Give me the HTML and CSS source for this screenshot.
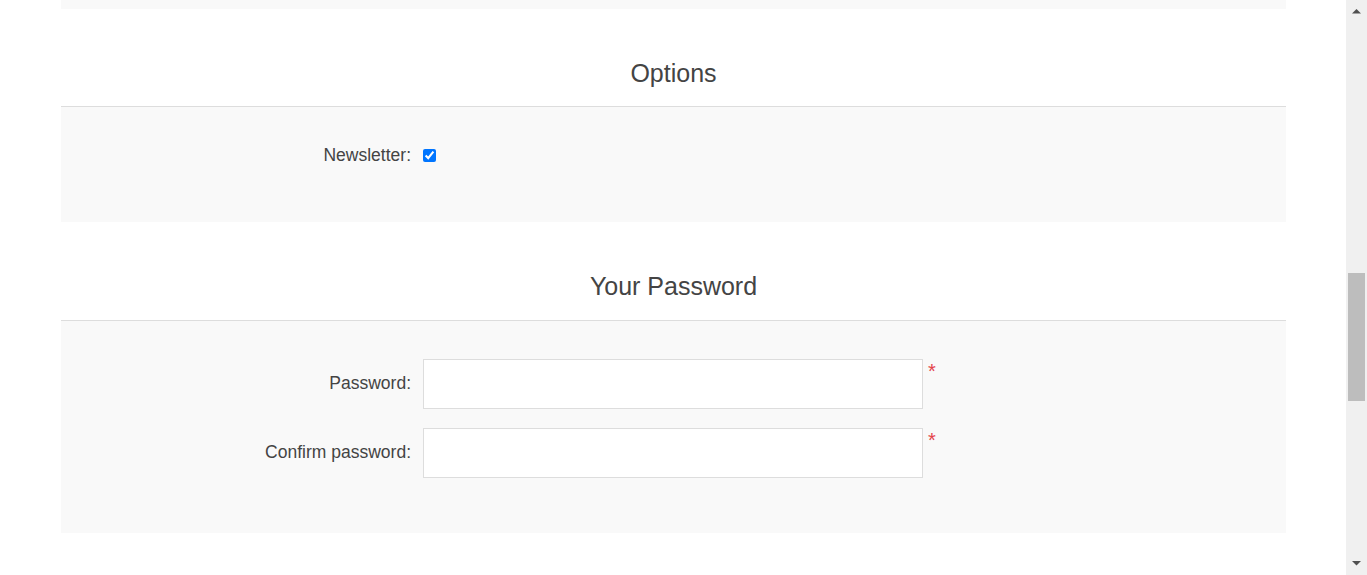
FILE: index.html
```html
<!DOCTYPE html>
<html lang="en">
<head>
<meta charset="utf-8">
<title>Register</title>
<link rel="stylesheet" href="styles.css">
</head>
<body>
<div class="master">
  <form class="page-body">
    <div class="form-fields prev-end"></div>

    <section class="fieldset first">
      <div class="title">Options</div>
      <div class="form-fields">
        <div class="inputs check-row">
          <label for="newsletter">Newsletter:</label>
          <input id="newsletter" class="check" type="checkbox" checked>
        </div>
      </div>
    </section>

    <section class="fieldset">
      <div class="title">Your Password</div>
      <div class="form-fields">
        <div class="inputs">
          <label for="pw">Password:</label>
          <input id="pw" class="text-box" type="password"><span class="required">*</span>
        </div>
        <div class="inputs">
          <label for="cpw">Confirm password:</label>
          <input id="cpw" class="text-box" type="password"><span class="required">*</span>
        </div>
      </div>
    </section>
  </form>
</div>

<div class="scrollbar" aria-hidden="true">
  <svg class="arrow" width="21" height="21" viewBox="0 0 21 21"><polygon points="6,13.5 10.5,9 15,13.5" fill="#505050"/></svg>
  <div class="track"><div class="thumb"></div></div>
  <svg class="arrow" width="21" height="21" viewBox="0 0 21 21"><polygon points="6,7 15,7 10.5,11.5" fill="#505050"/></svg>
</div>
</body>
</html>
```

FILE: styles.css
```css
body {
  margin: 0;
  background: #fff;
  font-family: "Liberation Sans", Arial, sans-serif;
  color: #444;
  overflow: hidden;
}

.master {
  width: 1225px;
  margin: 0 0 0 61px;
}

/* fieldsets */
.fieldset { margin-top: 48px; }
.fieldset + .fieldset { margin-top: 49px; }
.title {
  text-align: center;
  font-size: 25px;
  line-height: 30px;
  color: #444;
  padding-bottom: 19px;
  border-bottom: 1px solid #ddd;
}
.fieldset.first .title {
  padding-top: 1px;
  padding-bottom: 18px;
}
.form-fields {
  background: #f9f9f9;
  padding: 38px 0 36px;
}
.form-fields.prev-end {
  height: 9px;
  padding: 0;
}
.inputs {
  display: flex;
  align-items: center;
  margin-bottom: 19px;
}
.inputs label {
  width: 350px;
  flex: none;
  margin-right: 12px;
  padding-bottom: 2px;
  text-align: right;
  font-size: 17.5px;
  color: #444;
}
.check-row { height: 22px; }
.check {
  margin: 0 0 2px;
  width: 13px;
  height: 13px;
  accent-color: #0075ff;
}
.text-box {
  box-sizing: border-box;
  width: 500px;
  height: 50px;
  border: 1px solid #ddd;
  background: #fff;
  padding: 0 10px;
  margin: 0;
  font: inherit;
}
.required {
  align-self: flex-start;
  margin: 0 -8px 0 5px;
  font-size: 20px;
  line-height: 24px;
  color: #e4434b;
}

/* window scrollbar drawn over the right edge of the page */
.scrollbar {
  position: fixed;
  top: 0;
  right: 0;
  bottom: 0;
  width: 21px;
  background: #f0f0f0;
  display: flex;
  flex-direction: column;
}
.arrow { flex: none; display: block; }
.track {
  flex: 1;
  padding-top: 252px;
}
.thumb {
  width: 17px;
  height: 128px;
  margin-left: 2px;
  background: #bdbdbd;
}
```
